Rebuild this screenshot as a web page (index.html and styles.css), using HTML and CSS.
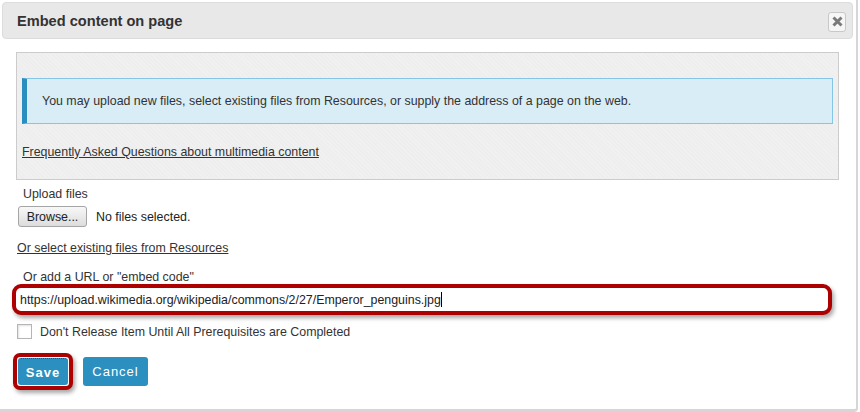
FILE: index.html
```html
<!DOCTYPE html>
<html>
<head>
<meta charset="utf-8">
<link rel="stylesheet" href="styles.css">
</head>
<body>
<div class="dialog">
  <div class="header">
    <h1 class="title">Embed content on page</h1>
    <span class="close">
      <svg width="11" height="11" viewBox="0 0 11 11"><path d="M1.5 1.5L9.5 9.5M9.5 1.5L1.5 9.5" stroke="#7a7a7a" stroke-width="3" stroke-linecap="butt"/></svg>
    </span>
  </div>
  <div class="panel">
    <div class="info">You may upload new files, select existing files from Resources, or supply the address of a page on the web.</div>
    <a class="faq" href="#">Frequently Asked Questions about multimedia content</a>
  </div>
  <div class="form">
    <div class="label upload-label">Upload files</div>
    <div class="file-row">
      <span class="browse">Browse...</span>
      <span class="nofile">No files selected.</span>
    </div>
    <a class="link resources" href="#">Or select existing files from Resources</a>
    <div class="label url-label">Or add a URL or "embed code"</div>
    <div class="url-highlight">
      <div class="url-input">https://upload.wikimedia.org/wikipedia/commons/2/27/Emperor_penguins.jpg<span class="caret"></span></div>
    </div>
    <div class="check-row">
      <span class="checkbox"></span>
      <span class="check-label">Don't Release Item Until All Prerequisites are Completed</span>
    </div>
    <div class="buttons">
      <span class="save-ring"><span class="btn save">Save</span></span>
      <span class="btn cancel">Cancel</span>
    </div>
  </div>
</div>
</body>
</html>
```

FILE: styles.css
```css
html, body {
  margin: 0;
  padding: 0;
  background: #ffffff;
}
body {
  font-family: "Liberation Sans", Arial, sans-serif;
  color: #333333;
  font-size: 12.4px;
}
.dialog {
  width: 856px;
  height: 409px;
  border-right: 2px solid #d6d6d6;
  border-bottom: 3px solid #d6d6d6;
  border-bottom-right-radius: 4px;
  box-sizing: content-box;
  overflow: hidden;
}
.header {
  margin: 2px 0 0 2px;
  width: 851px;
  height: 37px;
  box-sizing: border-box;
  background: #e8e8e8;
  border: 1px solid #dcdcdc;
  border-radius: 4px;
  display: flex;
  align-items: center;
  justify-content: space-between;
  padding: 0 6px 0 14px;
}
.title {
  margin: 0;
  font-size: 14.6px;
  font-weight: bold;
  color: #333333;
}
.close {
  width: 18px;
  height: 20px;
  box-sizing: border-box;
  border: 1px solid #c8c8c8;
  border-radius: 3px;
  background: #f6f6f6;
  display: flex;
  align-items: center;
  justify-content: center;
  margin-top: 2px;
}
.panel {
  margin: 13px 0 0 16px;
  width: 823px;
  height: 128px;
  box-sizing: border-box;
  border: 1px solid #cccccc;
  background-color: #eeeeee;
  background-image: repeating-linear-gradient(45deg, rgba(255,255,255,0.18) 0 1px, transparent 1px 3px);
  padding: 25px 5px 0 5px;
}
.info {
  height: 46px;
  box-sizing: border-box;
  background: #d9edf7;
  border: 1px solid #85c5e5;
  border-left: 5px solid #2b8ec0;
  padding: 0 0 0 15px;
  display: flex;
  align-items: center;
  color: #333333;
}
.faq {
  display: block;
  margin-top: 21px;
  color: #333333;
  text-decoration: underline;
}
.form {
  padding: 0 0 0 17px;
}
.label {
  color: #333333;
}
.upload-label {
  margin: 6px 0 0 6px;
  line-height: 16px;
}
.file-row {
  display: flex;
  align-items: center;
  margin-top: 4px;
  margin-left: 1px;
}
.browse {
  width: 69px;
  height: 21px;
  box-sizing: border-box;
  border: 1px solid #a5a5a5;
  border-radius: 3px;
  background: linear-gradient(#f8f8f8, #dcdcdc);
  display: flex;
  align-items: center;
  justify-content: center;
  color: #222222;
}
.nofile {
  margin-left: 9px;
  color: #222222;
}
.link {
  color: #333333;
  text-decoration: underline;
}
.resources {
  display: block;
  margin-top: 13px;
  line-height: 16px;
}
.url-label {
  margin: 13px 0 0 6px;
  line-height: 16px;
}
.url-highlight {
  margin: -1px 0 0 -5px;
  width: 820px;
  height: 31px;
  box-sizing: border-box;
  border: 4px solid #ad0000;
  border-radius: 9px;
  background: #ffffff;
  box-shadow: 2px 3px 4px rgba(0,0,0,0.35);
  display: flex;
  align-items: center;
}
.url-input {
  padding-left: 4px;
  color: #222222;
  display: flex;
  align-items: center;
}
.caret {
  display: inline-block;
  width: 1px;
  height: 15px;
  background: #000000;
}
.check-row {
  display: flex;
  align-items: center;
  margin-top: 9px;
}
.checkbox {
  width: 15px;
  height: 15px;
  box-sizing: border-box;
  border: 1px solid #b5b5b5;
  background: #ffffff;
  box-shadow: inset 1px 1px 2px rgba(0,0,0,0.12);
}
.check-label {
  margin-left: 8px;
  color: #333333;
}
.buttons {
  display: flex;
  align-items: center;
  margin-top: 14px;
  margin-left: -4px;
}
.save-ring {
  display: inline-flex;
  padding: 1px;
  border: 4px solid #ad0000;
  border-radius: 7px;
  box-shadow: 2px 3px 4px rgba(0,0,0,0.35);
  background: #ffffff;
}
.btn {
  display: inline-flex;
  align-items: center;
  justify-content: center;
  background: #2b8fc0;
  color: #ffffff;
  font-size: 13px;
  border-radius: 3px;
  letter-spacing: 1px;
}
.save {
  width: 50px;
  height: 27px;
  font-weight: bold;
  border-top: 1px dotted #1a5c80;
  box-sizing: border-box;
}
.cancel {
  margin-left: 10px;
  width: 65px;
  height: 29px;
}
```
